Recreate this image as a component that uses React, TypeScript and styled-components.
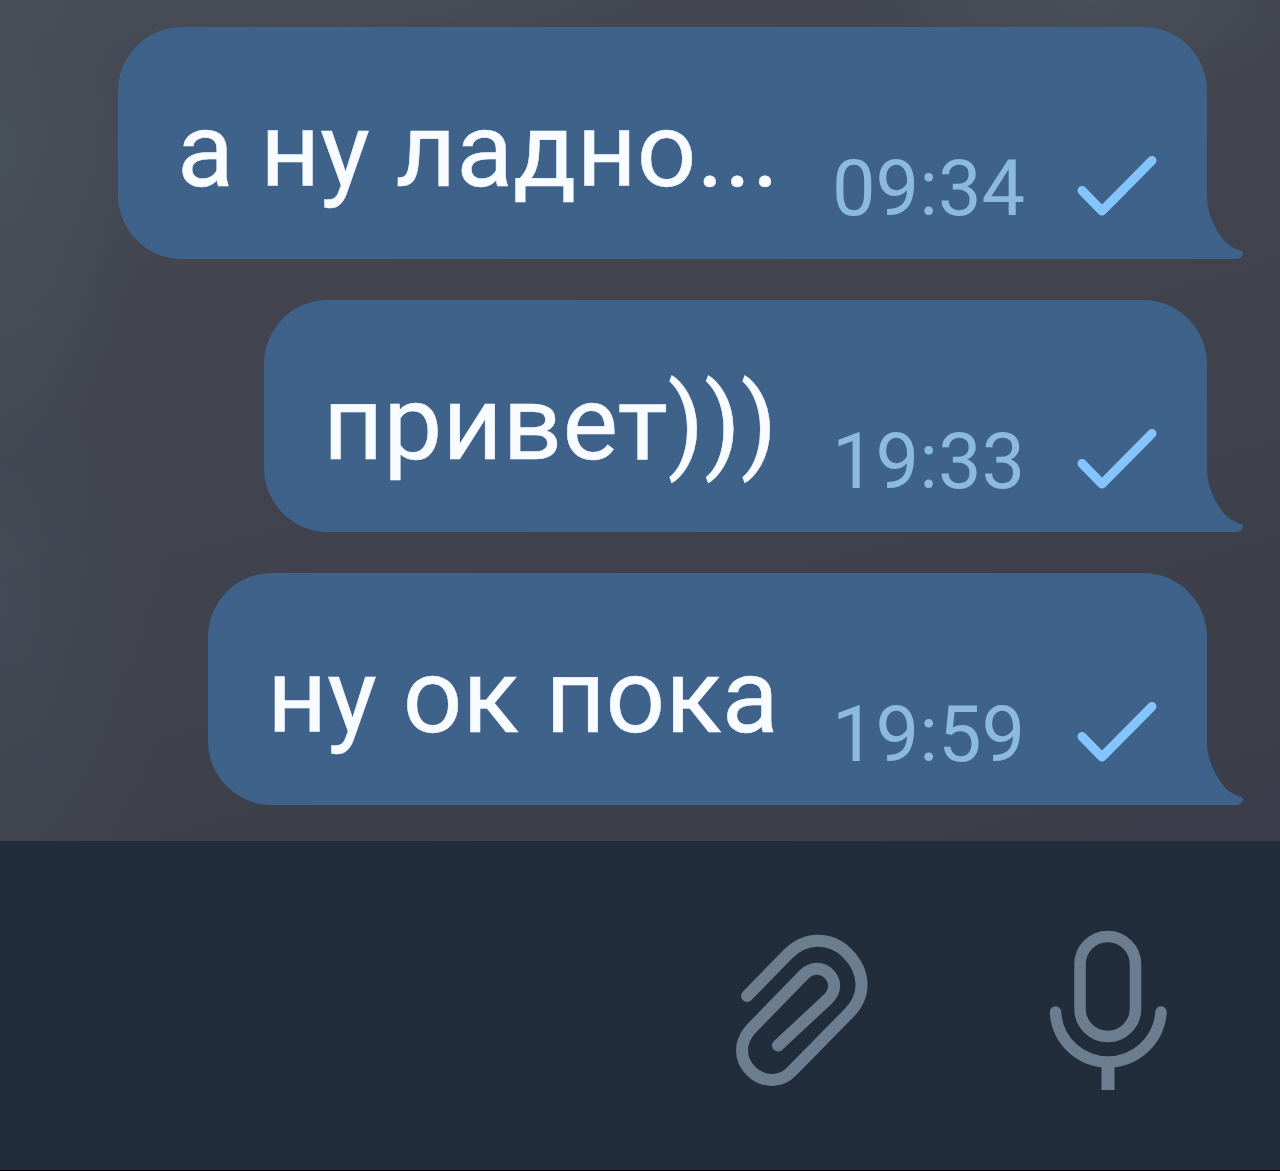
import React from "react";
import styled, { createGlobalStyle } from "styled-components";

const GlobalStyle = createGlobalStyle`
  * { box-sizing: border-box; }
  body { margin: 0; background: #212d3a; }
`;

const Screen = styled.main`
  display: flex;
  flex-direction: column;
  width: 1280px;
  height: 1171px;
  overflow: hidden;
  border-bottom: 1px solid #000;
  font-family: Roboto, "Noto Sans", sans-serif;
`;

const Chat = styled.section`
  display: flex;
  flex-direction: column;
  align-items: flex-end;
  gap: 41px;
  height: 841px;
  padding: 27px 73px 0 0;
  background:
    radial-gradient(ellipse 150px 300px at 0 150px, rgba(76, 90, 98, 0.5), transparent),
    radial-gradient(ellipse 230px 110px at 1090px 0, rgba(76, 86, 94, 0.6), transparent),
    radial-gradient(ellipse 170px 420px at 0 600px, rgba(70, 78, 90, 0.6), transparent),
    radial-gradient(ellipse 420px 60px at 260px 0, rgba(74, 82, 90, 0.5), transparent),
    linear-gradient(165deg, #454954 0%, #42444f 35%, #3e404b 70%, #3b3d4a 100%);
`;

const Bubble = styled.article`
  position: relative;
  display: flex;
  align-items: flex-start;
  height: 232px;
  padding: 60px 47px 0 59px;
  border-radius: 64px 64px 0 64px;
  background: #3e6289;
`;

const Message = styled.p<{ $width: number }>`
  width: ${(p) => p.$width}px;
  margin: 0;
  color: #f8fbff;
  font-size: 104.7px;
  line-height: 127px;
  white-space: nowrap;
  -webkit-text-stroke: 0.5px #f8fbff;
`;

const Time = styled.time`
  width: 242px;
  margin-top: 57px;
  color: #8bb9e0;
  font-size: 77.6px;
  line-height: 90px;
  white-space: nowrap;
`;

const CheckIcon = styled.svg`
  flex: none;
  width: 86px;
  height: 66px;
  margin-top: 69px;
  fill: none;
  stroke: #84c5ff;
  stroke-width: 9;
  stroke-linecap: round;
  stroke-linejoin: round;
`;

const Tail = styled.svg`
  position: absolute;
  right: -37px;
  bottom: 0;
  width: 38px;
  height: 64px;
  fill: #3e6289;
`;

const Composer = styled.footer`
  display: flex;
  flex: 1;
  align-items: flex-start;
  justify-content: flex-end;
  gap: 175px;
  padding: 86px 109px 0 0;
  background: #212d3a;
`;

const ActionButton = styled.button<{ $width: number }>`
  display: flex;
  width: ${(p) => p.$width}px;
  height: 168px;
  padding: 0;
  border: 0;
  background: none;
`;

const ActionIcon = styled.svg`
  width: 100%;
  height: 100%;
  fill: none;
  stroke: #6d7d90;
  stroke-linecap: round;
  stroke-linejoin: round;
`;

const messages = [
  { text: "а ну ладно...", time: "09:34", width: 655 },
  { text: "привет)))", time: "19:33", width: 509 },
  { text: "ну ок пока", time: "19:59", width: 565 },
];

export default function App() {
  return (
    <Screen>
      <GlobalStyle />
      <Chat>
        {messages.map((m) => (
          <Bubble key={m.time}>
            <Message $width={m.width}>{m.text}</Message>
            <Time>{m.time}</Time>
            <CheckIcon viewBox="0 0 86 66">
              <path d="M8 34.500 L28 55 L78 4.500" />
            </CheckIcon>
            <Tail viewBox="0 0 38 64">
              <path d="M0 0 H1 C1 14 5 25 12 37 C19 48 25 53 35 56 Q38 57 37 59 Q35 64 31 64 H0 Z" />
            </Tail>
          </Bubble>
        ))}
      </Chat>
      <Composer>
        <ActionButton $width={140} aria-label="Прикрепить">
          <ActionIcon viewBox="0 0 140 168" strokeWidth="12">
            <path d="M15 69 L56 27 C73 10 98 9 115 26 C134 45 134 69 117 86 L60 144 C49 156 31 156 19 144 C7 132 7 115 19 102 L72 47.500 C80 40 90 40 97 47 C104 54 104 64 96 72 L46 118.500" />
          </ActionIcon>
        </ActionButton>
        <ActionButton $width={124} aria-label="Голосовое сообщение">
          <ActionIcon viewBox="0 0 124 168" strokeWidth="11.500">
            <rect x="33" y="9.500" width="55.500" height="100" rx="27.750" />
            <path d="M8.500 85 C10 115 35 135 61 135 S112 115 114 85" />
            <path d="M61 136 V163" strokeWidth="13" strokeLinecap="butt" />
          </ActionIcon>
        </ActionButton>
      </Composer>
    </Screen>
  );
}
